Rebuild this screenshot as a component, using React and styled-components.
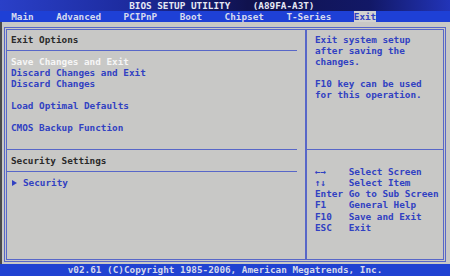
import React from 'react';
import styled, { createGlobalStyle } from 'styled-components';

const ROW = '11.04px';
const BLUE_TEXT = '#3141c2';
const LINE = '#5867c8';

const GlobalStyle = createGlobalStyle`
  html, body {
    margin: 0;
    padding: 0;
    background: #c8c8c6;
  }
`;

const Screen = styled.div`
  width: 450px;
  height: 276px;
  display: flex;
  flex-direction: column;
  overflow: hidden;
  background: #c8c8c6;
  font-family: "DejaVu Sans Mono", "Liberation Mono", monospace;
  font-size: 9.34px;
  font-weight: bold;
  white-space: pre;
`;

const TitleBar = styled.div`
  height: 11px;
  line-height: 11px;
  padding-left: 23ch;
  color: #e6e8f4;
  background: linear-gradient(90deg, #2a40c8 0%, #1c2a9c 30%, #10124e 55%, #121866 82%, #2234b8 100%);
`;

const MenuBar = styled.div`
  height: 11px;
  display: flex;
  gap: 4ch;
  padding-left: 2ch;
  background: #1e40d6;
`;

const Tab = styled.div`
  line-height: 11px;
  color: ${p => (p.active ? BLUE_TEXT : '#d6daf0')};
  background: ${p => (p.active ? '#d2d2d0' : 'transparent')};
`;

const Body = styled.div`
  flex: 1;
  display: flex;
  padding: 5px 4px 2px 2px;
  border-left: 2px solid #4a4a4a;
`;

const Frame = styled.div`
  flex: 1;
  display: grid;
  grid-template-columns: 298px 1fr;
  border: 3px double ${LINE};
`;

const Column = styled.div`
  display: flex;
  flex-direction: column;
  padding-top: 4px;
  padding-left: ${p => p.pad}px;
  padding-right: ${p => p.padRight || 0}px;
  border-left: ${p => (p.divider ? `2px solid ${LINE}` : 'none')};
`;

const Row = styled.div`
  height: ${ROW};
  line-height: ${ROW};
  display: flex;
  align-items: center;
  color: ${p => (p.tone === 'head' ? '#2a2a2a' : p.tone === 'hi' ? '#f6f6f6' : BLUE_TEXT)};
`;

const Rule = styled.div`
  height: ${ROW};
  display: flex;
  align-items: center;
  margin-left: -${p => p.pull}px;

  &::after {
    content: "";
    flex: 1;
    height: 1px;
    background: ${LINE};
  }
`;

const Key = styled.span`
  width: 6ch;
`;

const Arrow = styled.span`
  width: 0;
  height: 0;
  border-left: 5px solid ${BLUE_TEXT};
  border-top: 3px solid transparent;
  border-bottom: 3px solid transparent;
  margin: 0 6px 0 1px;
`;

const Footer = styled.div`
  height: 12px;
  line-height: 12px;
  text-align: center;
  color: #d4d8ec;
  background: #2042d2;
`;

const tabs = ['Main', 'Advanced', 'PCIPnP', 'Boot', 'Chipset', 'T-Series', 'Exit'];

const keys = [
  ['←→', 'Select Screen'],
  ['↑↓', 'Select Item'],
  ['Enter', 'Go to Sub Screen'],
  ['F1', 'General Help'],
  ['F10', 'Save and Exit'],
  ['ESC', 'Exit'],
];

export default function App() {
  return (
    <>
      <GlobalStyle />
      <Screen>
        <TitleBar>BIOS SETUP UTILITY    (A89FA-A3T)</TitleBar>
        <MenuBar>
          {tabs.map(t => (
            <Tab key={t} active={t === 'Exit'}>{t}</Tab>
          ))}
        </MenuBar>
        <Body>
          <Frame>
            <Column pad={4} padRight={8}>
              <Row tone="head">Exit Options</Row>
              <Rule pull={4} />
              <Row tone="hi">Save Changes and Exit</Row>
              <Row>Discard Changes and Exit</Row>
              <Row>Discard Changes</Row>
              <Row />
              <Row>Load Optimal Defaults</Row>
              <Row />
              <Row>CMOS Backup Function</Row>
              <Row />
              <Rule pull={4} />
              <Row tone="head">Security Settings</Row>
              <Rule pull={4} />
              <Row><Arrow />Security</Row>
            </Column>
            <Column pad={8} divider>
              <Row>Exit system setup</Row>
              <Row>after saving the</Row>
              <Row>changes.</Row>
              <Row />
              <Row>F10 key can be used</Row>
              <Row>for this operation.</Row>
              <Row />
              <Row />
              <Row />
              <Row />
              <Rule pull={8} />
              <Row />
              {keys.map(([k, d]) => (
                <Row key={k}>
                  <Key>{k}</Key>
                  <span>{d}</span>
                </Row>
              ))}
            </Column>
          </Frame>
        </Body>
        <Footer>v02.61 (C)Copyright 1985-2006, American Megatrends, Inc.</Footer>
      </Screen>
    </>
  );
}
